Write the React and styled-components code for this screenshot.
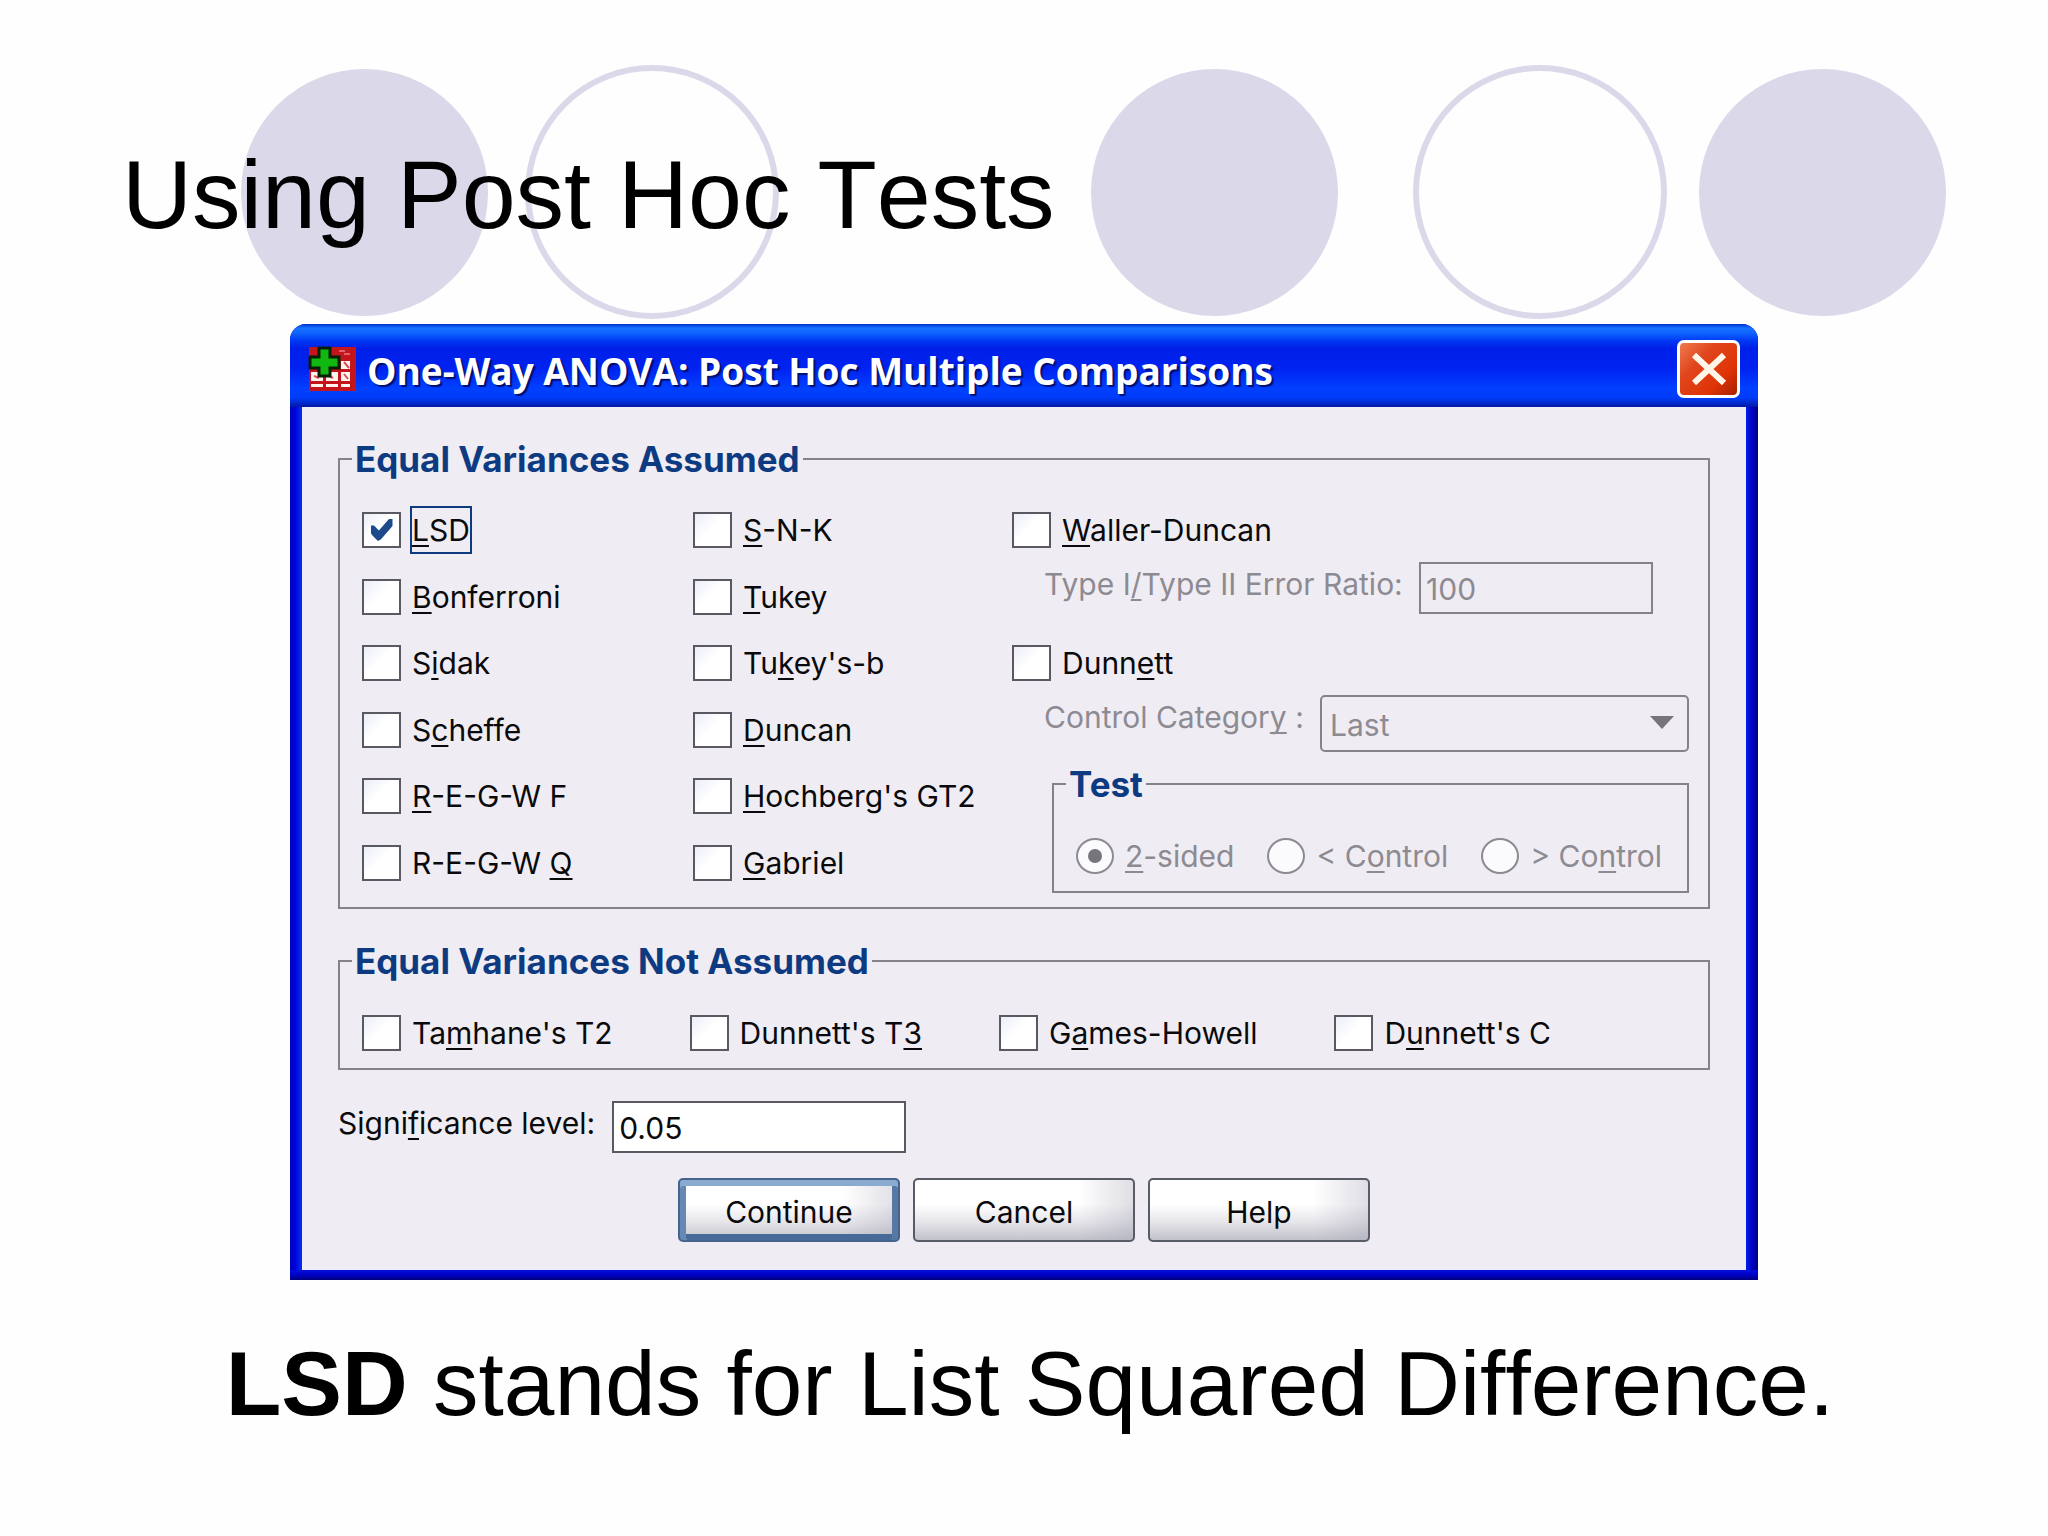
import React from "react";
import styled, { createGlobalStyle } from "styled-components";

const palette = {
  lilac: "#dbd8ea",
  panel: "#efedf3",
  line: "#85828a",
  ink: "#0a0a0c",
  faded: "#8d8a92",
  navy: "#0d3a80",
};

const GlobalStyle = createGlobalStyle`
  *, *::before, *::after {
    box-sizing: border-box;
  }
  body {
    margin: 0;
    background: #fefefe;
    color: #000;
    font-family: "Liberation Sans", Arial, sans-serif;
  }
`;

const Header = styled.header`
  display: grid;
  padding-top: 64px;
  align-items: center;

  > * {
    grid-area: 1 / 1;
  }
`;

const Circles = styled.div`
  display: flex;
  align-items: center;
  height: 256px;
`;

const Circle = styled.div`
  flex: none;
  width: ${({ $ring }) => ($ring ? 254 : 247)}px;
  aspect-ratio: 1;
  margin-left: ${({ $gap }) => $gap}px;
  border-radius: 50%;
  border: 6px solid ${palette.lilac};
  background: ${({ $ring }) => ($ring ? "transparent" : palette.lilac)};
`;

const SlideTitle = styled.h1`
  margin: 0;
  padding: 6px 0 0 122px;
  font-size: 97px;
  line-height: 112px;
  font-weight: normal;
  font-kerning: none;
`;

const Caption = styled.p`
  margin: 0;
  padding: 50px 0 0 12px;
  font-size: 91px;
  line-height: 108px;
  font-kerning: none;
  text-align: center;
`;

const DialogArea = styled.main`
  padding: 4px 290px 0;
`;

const Dialog = styled.section`
  display: flex;
  flex-direction: column;
  padding: 0 12px 10px;
  border-radius: 16px 16px 0 0;
  overflow: hidden;
  background: linear-gradient(to top, #00007c 0, #0000c4 5px, #0010e0 10px, transparent 10px),
    linear-gradient(to right, #0000c0 0, #0000d8 5px, #0032f0 12px, transparent 12px),
    linear-gradient(to left, #00007c 0, #0000c4 6px, #0020e8 12px, transparent 12px),
    #0020e0;
  font-family: Inter, "Liberation Sans", sans-serif;
  font-size: 30px;
  line-height: 44px;
  color: ${palette.ink};
`;

const TitleBar = styled.div`
  display: flex;
  align-items: center;
  height: 83px;
  margin: 0 -12px;
  padding: 6px 18px 0;
  background: linear-gradient(
    #0030d0 0,
    #1670ff 4px,
    #1068ff 8px,
    #0038f4 17px,
    #0020e8 24px,
    #0022f0 44px,
    #0040ff 64px,
    #003cf8 74px,
    #0018a8 83px
  );
`;

const TitleText = styled.h2`
  flex: 1;
  margin: 0;
  padding: 4px 0 0 10px;
  font-family: "Open Sans", "Noto Sans", sans-serif;
  font-size: 37px;
  line-height: 48px;
  font-weight: bold;
  color: #fff;
  text-shadow: 2px 2px 1px #001070;
`;

const CloseButton = styled.button`
  display: flex;
  align-items: center;
  justify-content: center;
  width: 63px;
  height: 58px;
  padding: 0;
  border: 3px solid #fff;
  border-radius: 7px;
  background: linear-gradient(135deg, #ee7a50 0%, #e0441c 35%, #e03408 70%, #a82000 100%);
`;

const Body = styled.form`
  padding: 32px 36px 28px;
  background: ${palette.panel};
`;

const Group = styled.fieldset`
  min-width: 0;
  margin: 0;
  padding: 0 12px;
  border: 2px solid ${palette.line};
`;

const Legend = styled.legend`
  padding: 0 3px;
  font-size: 35px;
  line-height: 40px;
  font-weight: bold;
  color: ${palette.navy};
`;

const TestGroup = styled(Group)`
  margin: 12px 0 0 40px;
`;

const LowerGroup = styled(Group)`
  margin-top: 32px;
`;

const Columns = styled.div`
  display: grid;
  grid-template-columns: 331fr 319fr 677fr;
  padding: 29px 7px 14px 10px;
`;

const Column = styled.div`
  display: flex;
  flex-direction: column;
  align-items: flex-start;
  justify-content: space-between;
  padding-bottom: 8px;
`;

const Line = styled.div`
  display: flex;
  gap: ${({ $gap }) => $gap}px;
  padding: 30px 0 13px 10px;
`;

const Choice = styled.label`
  display: flex;
  align-items: center;
  gap: 11px;
  white-space: nowrap;
  color: ${({ $disabled }) => ($disabled ? palette.faded : "inherit")};
`;

const Check = styled.input`
  appearance: none;
  display: grid;
  place-items: center;
  flex: none;
  width: 39px;
  height: 36px;
  margin: 0;
  border: 2px solid #5a5860;
  background: linear-gradient(135deg, #eceef8 0%, #fff 45%);

  &:checked::before {
    content: "";
    width: 22px;
    height: 22px;
    background: #1c4a8c;
    clip-path: polygon(0 30%, 16% 30%, 38% 52%, 84% 0, 100% 0, 100% 32%, 48% 92%, 34% 100%, 10% 76%, 0 62%);
  }
`;

const Radio = styled.input`
  appearance: none;
  display: grid;
  place-items: center;
  flex: none;
  width: 38px;
  height: 36px;
  margin: 0;
  border: 2px solid ${palette.faded};
  border-radius: 50%;
  background: #fbfafc;

  &:checked::before {
    content: "";
    width: 14px;
    height: 14px;
    border-radius: 50%;
    background: #77747c;
  }
`;

const ChoiceText = styled.span`
  outline: ${({ $focused }) => ($focused ? `2px solid ${palette.navy}` : "none")};
`;

const Key = styled.span`
  text-decoration: underline;
  text-decoration-thickness: 2px;
  text-decoration-skip-ink: none;
  text-underline-offset: 4px;
`;

const Detail = styled.div`
  display: flex;
  justify-content: space-between;
  align-items: flex-start;
  margin-top: 10px;
  padding: 0 ${({ $right }) => $right || 0}px 0 32px;
  color: ${palette.faded};
  white-space: nowrap;

  & + label {
    margin-top: 27px;
  }
`;

const TextBox = styled.input`
  width: ${({ $width }) => $width}px;
  height: 52px;
  padding: 2px 5px 0;
  border: 2px solid #5a5860;
  border-radius: 0;
  background: #fff;
  color: ${palette.ink};
  font: inherit;

  &:disabled {
    border-color: ${palette.line};
    background: transparent;
    color: ${palette.faded};
  }
`;

const SelectWrap = styled.div`
  position: relative;
  width: 369px;

  svg {
    position: absolute;
    right: 15px;
    top: 21px;
  }
`;

const Select = styled.select`
  appearance: none;
  display: block;
  width: 100%;
  height: 57px;
  padding: 3px 8px 0;
  border: 2px solid ${palette.line};
  border-radius: 5px;
  background: transparent;
  color: ${palette.faded};
  font: inherit;
  opacity: 1;
`;

const LevelRow = styled.div`
  display: flex;
  align-items: flex-start;
  gap: 17px;
  margin-top: 31px;
`;

const Buttons = styled.div`
  display: flex;
  justify-content: center;
  gap: 13px;
  margin-top: 25px;
`;

const Button = styled.button`
  width: 222px;
  height: 64px;
  padding: 4px 0 0;
  border: 2px solid #585c66;
  border-radius: 5px;
  background: linear-gradient(to right, transparent 75%, rgba(160, 160, 178, 0.35)),
    linear-gradient(#fff 0%, #fff 40%, #e6e5ea 70%, #c2c2ca 100%);
  color: ${palette.ink};
  font: inherit;
`;

const DefaultButton = styled(Button)`
  border-color: #44648e;
  box-shadow: inset 0 6px #8aaad0, inset 6px 0 #6888b4, inset -6px 0 #5878a4, inset 0 -6px #486a98;
`;

const equalLeft = ["&LSD", "&Bonferroni", "S&idak", "S&cheffe", "&R-E-G-W F", "R-E-G-W &Q"];
const equalMiddle = ["&S-N-K", "&Tukey", "Tu&key's-b", "&Duncan", "&Hochberg's GT2", "&Gabriel"];
const notAssumed = ["Ta&mhane's T2", "Dunnett's T&3", "G&ames-Howell", "D&unnett's C"];
const sides = ["&2-sided", "< C&ontrol", "> Co&ntrol"];

// "&" marks the letter that is underlined as the keyboard shortcut
const Mnemonic = ({ text }) => {
  const at = text.indexOf("&");
  return (
    <>
      {text.slice(0, at)}
      <Key>{text[at + 1]}</Key>
      {text.slice(at + 2)}
    </>
  );
};

const CheckItem = ({ text, checked }) => (
  <Choice>
    <Check type="checkbox" defaultChecked={checked} />
    <ChoiceText $focused={checked}>
      <Mnemonic text={text} />
    </ChoiceText>
  </Choice>
);

const AppIcon = () => (
  <svg width="49" height="46" viewBox="0 0 49 46" aria-hidden="true">
    <rect x="1" y="1" width="47" height="44" fill="#c4141c" />
    <path d="M31 5h6M36 8h6" stroke="#e2606a" strokeWidth="2" />
    <g fill="#fff4f0">
      <rect x="33" y="15" width="9" height="8" />
      <rect x="3" y="26" width="12" height="9" />
      <rect x="18" y="26" width="12" height="9" />
      <rect x="33" y="26" width="9" height="9" />
      <rect x="3" y="38" width="12" height="3" />
      <rect x="18" y="38" width="12" height="3" />
      <rect x="33" y="38" width="9" height="3" />
    </g>
    <path d="M36 16l5 6M36 28l4 5M6 30l5 2M21 30l4 2" stroke="#d8505a" strokeWidth="2" />
    <path
      d="M11 2h11v9h9v11h-9v8H11v-8H2V11h9z"
      fill="#12b812"
      stroke="#062006"
      strokeWidth="3"
    />
  </svg>
);

const CloseIcon = () => (
  <svg width="36" height="34" viewBox="0 0 36 34" aria-hidden="true">
    <path d="M3 3l30 28M33 3L3 31" stroke="#fff6e8" strokeWidth="6" />
  </svg>
);

const App = () => (
  <>
    <GlobalStyle />
    <Header>
      <Circles>
        <Circle $gap={241} />
        <Circle $ring $gap={37} />
        <Circle $gap={312} />
        <Circle $ring $gap={75} />
        <Circle $gap={32} />
      </Circles>
      <SlideTitle>Using Post Hoc Tests</SlideTitle>
    </Header>
    <DialogArea>
      <Dialog>
        <TitleBar>
          <AppIcon />
          <TitleText>One-Way ANOVA: Post Hoc Multiple Comparisons</TitleText>
          <CloseButton type="button" aria-label="Close">
            <CloseIcon />
          </CloseButton>
        </TitleBar>
        <Body onSubmit={(e) => e.preventDefault()}>
          <Group>
            <Legend>Equal Variances Assumed</Legend>
            <Columns>
              <Column>
                {equalLeft.map((text, i) => (
                  <CheckItem key={text} text={text} checked={i === 0} />
                ))}
              </Column>
              <Column>
                {equalMiddle.map((text) => (
                  <CheckItem key={text} text={text} />
                ))}
              </Column>
              <div>
                <CheckItem text="&Waller-Duncan" />
                <Detail $right={36}>
                  <label htmlFor="ratio">
                    <Mnemonic text="Type I&/Type II Error Ratio:" />
                  </label>
                  <TextBox id="ratio" $width={234} defaultValue="100" disabled />
                </Detail>
                <CheckItem text="Dunn&ett" />
                <Detail>
                  <label htmlFor="category">
                    <Mnemonic text="Control Categor&y :" />
                  </label>
                  <SelectWrap>
                    <Select id="category" disabled>
                      <option>Last</option>
                    </Select>
                    <svg width="24" height="13" viewBox="0 0 24 13" aria-hidden="true">
                      <path d="M0 0h24L12 13z" fill="#77747c" />
                    </svg>
                  </SelectWrap>
                </Detail>
                <TestGroup>
                  <Legend>Test</Legend>
                  <Line $gap={33}>
                    {sides.map((text, i) => (
                      <Choice key={text} $disabled>
                        <Radio type="radio" name="side" defaultChecked={i === 0} disabled />
                        <span>
                          <Mnemonic text={text} />
                        </span>
                      </Choice>
                    ))}
                  </Line>
                </TestGroup>
              </div>
            </Columns>
          </Group>
          <LowerGroup>
            <Legend>Equal Variances Not Assumed</Legend>
            <Line $gap={77}>
              {notAssumed.map((text) => (
                <CheckItem key={text} text={text} />
              ))}
            </Line>
          </LowerGroup>
          <LevelRow>
            <label htmlFor="level">
              <Mnemonic text="Signi&ficance level:" />
            </label>
            <TextBox id="level" $width={294} defaultValue="0.05" />
          </LevelRow>
          <Buttons>
            <DefaultButton type="submit">Continue</DefaultButton>
            <Button type="button">Cancel</Button>
            <Button type="button">Help</Button>
          </Buttons>
        </Body>
      </Dialog>
    </DialogArea>
    <Caption>
      <b>LSD</b> stands for List Squared Difference.
    </Caption>
  </>
);

export default App;
